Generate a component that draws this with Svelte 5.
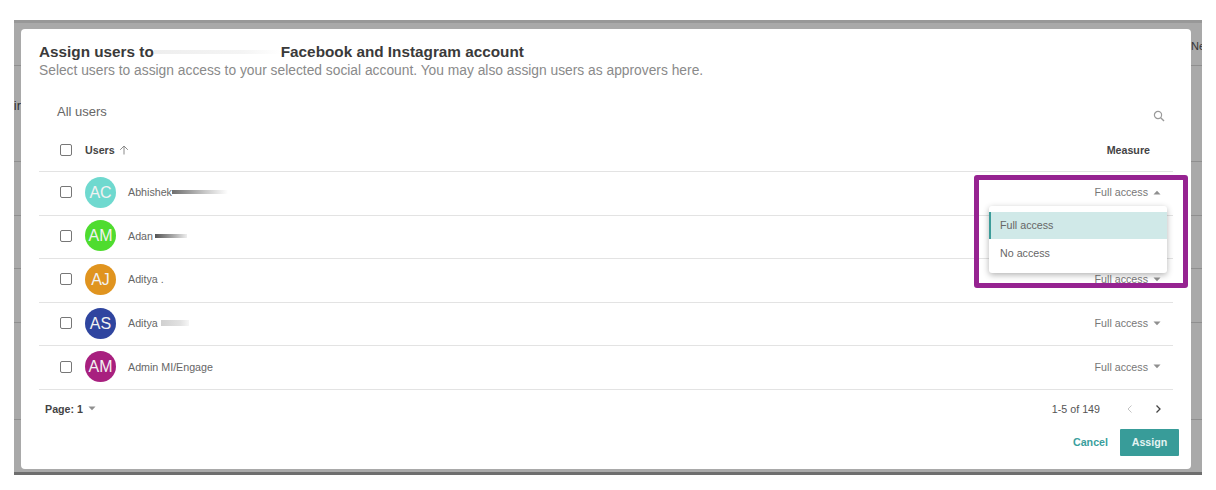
<script>
    const users = [
        { initials: "AC", name: "Abhishek", color: "#6fd9cf", blur: "wide", open: true },
        { initials: "AM", name: "Adan", color: "#4fdc2f", blur: "short", hidden: true },
        { initials: "AJ", name: "Aditya .", color: "#e0941f", clipped: true },
        { initials: "AS", name: "Aditya", color: "#2f459f", blur: "faint" },
        { initials: "AM", name: "Admin MI/Engage", color: "#a8207f" }
    ];

    // lines of the page that sits behind the dialog
    const pageRows = [42, 95, 53, 52, 53, 96];
</script>

<main class="page">
    <div class="backdrop">
        <div class="under">
            {#each pageRows as h}
                <div class="under-row" style="height: {h}px"></div>
            {/each}
        </div>
        <span class="peek left">ir</span>
        <span class="peek right">Ne</span>

        <section class="dialog">
            <header class="head">
                <h1>
                    <span>Assign users to</span>
                    <i class="smudge title-smudge"></i>
                    <span>Facebook and Instagram account</span>
                </h1>
                <p>Select users to assign access to your selected social account. You may also assign users as approvers here.</p>
            </header>

            <div class="tools">
                <span class="all">All users</span>
                <svg class="search" viewBox="0 0 12 12" width="12" height="12">
                    <circle cx="5" cy="5" r="3.6" fill="none" stroke="#9a9a9a" stroke-width="1.2" />
                    <path d="M7.7 7.7 11 11" stroke="#9a9a9a" stroke-width="1.4" />
                </svg>
            </div>

            <div class="table">
                <div class="row header">
                    <span class="check"></span>
                    <span class="col-users">Users</span>
                    <svg viewBox="0 0 10 10" width="10" height="10">
                        <path d="M5 9.5V1M1.2 4.8 5 1l3.8 3.8" fill="none" stroke="#8a8a8a" stroke-width="1" />
                    </svg>
                    <span class="col-measure">Measure</span>
                </div>

                {#each users as user}
                    <div class="row">
                        <span class="check"></span>
                        <span class="avatar" style="background: {user.color}">{user.initials}</span>
                        <span class="name">{user.name}</span>
                        {#if user.blur}
                            <i class="smudge {user.blur}"></i>
                        {/if}
                        {#if !user.hidden}
                            <span class="access">
                                Full access
                                <svg viewBox="0 0 8 5" width="8" height="5">
                                    <path d={user.open ? "M0.5 4.5 4 0.8 7.5 4.5Z" : "M0.5 0.5 4 4.2 7.5 0.5Z"} fill="#8f8f8f" />
                                </svg>
                            </span>
                        {/if}
                    </div>
                {/each}
            </div>

            <div class="pager">
                <span class="page-select">
                    Page: 1
                    <svg viewBox="0 0 8 5" width="8" height="5"><path d="M0.5 0.5 4 4.2 7.5 0.5Z" fill="#8f8f8f" /></svg>
                </span>
                <span class="count">1-5 of 149</span>
                <svg class="prev" viewBox="0 0 8 10" width="8" height="10"><path d="M5.5 1.5 2 5l3.5 3.5" fill="none" stroke="#c4c4c4" stroke-width="1" /></svg>
                <svg class="next" viewBox="0 0 8 10" width="8" height="10"><path d="M2.5 1.5 6 5 2.5 8.5" fill="none" stroke="#444" stroke-width="1.3" /></svg>
            </div>

            <footer class="actions">
                <button class="cancel">Cancel</button>
                <button class="assign">Assign</button>
            </footer>

            <div class="highlight"></div>
            <div class="menu">
                <div class="option active">Full access</div>
                <div class="option">No access</div>
            </div>
        </section>
    </div>
</main>

<style>
    :global(body) {
        margin: 0;
        background: #fff;
    }

    .page {
        width: 1216px;
        height: 490px;
        padding: 20px 14px 15px;
        box-sizing: border-box;
        font-family: "Liberation Sans", Arial, sans-serif;
        color: #555;
    }

    .backdrop {
        position: relative;
        height: 455px;
        background: #a9a9a9;
        border-top: 3px solid #989898;
        border-bottom: 3px solid #6e6e6e;
        box-sizing: border-box;
    }

    .under-row {
        border-bottom: 1px solid #8f8f8f;
    }

    .peek {
        position: absolute;
        color: #333;
        overflow: hidden;
    }

    .peek.left {
        left: 0;
        top: 75px;
        width: 7px;
        font-size: 13px;
        direction: rtl;
    }

    .peek.right {
        right: 0;
        top: 17px;
        width: 11px;
        font-size: 11px;
    }

    .dialog {
        position: absolute;
        left: 7px;
        top: 6px;
        width: 1170px;
        height: 440px;
        background: #fff;
        border-radius: 4px;
        padding: 14px 18px 0;
        box-sizing: border-box;
        display: flex;
        flex-direction: column;
    }

    .head h1 {
        margin: 0;
        display: flex;
        align-items: center;
        font-size: 15.3px;
        line-height: 17px;
        font-weight: 700;
        color: #3a3a3a;
    }

    .title-smudge {
        width: 127px;
    }

    .head p {
        margin: 2px 0 0;
        font-size: 13.8px;
        line-height: 17px;
        color: #8a8a8a;
    }

    .smudge {
        display: inline-block;
        height: 4px;
        background: linear-gradient(90deg, #eee, #f4f4f4 70%, #fff);
    }

    .smudge.wide {
        width: 56px;
        background: linear-gradient(90deg, #6e6e6e, #c9c9c9 60%, #fff);
    }

    .smudge.short {
        width: 32px;
        margin-left: 2px;
        background: linear-gradient(90deg, #555, #b5b5b5 65%, #eee);
    }

    .smudge.faint {
        width: 28px;
        height: 6px;
        margin-left: 3px;
        background: linear-gradient(90deg, #d0d0d0, #e2e2e2 70%, #f6f6f6);
    }

    .tools {
        display: flex;
        align-items: center;
        justify-content: space-between;
        padding: 0 8px 0 18px;
        margin-top: 18px;
        height: 28px;
    }

    .all {
        font-size: 13px;
        color: #666;
    }

    .search {
        margin-top: 10px;
    }

    .table {
        margin-top: 9px;
    }

    .row {
        height: 43.6px;
        display: flex;
        align-items: center;
        padding: 0 23px 2px 21px;
        border-bottom: 1px solid #e3e3e3;
        box-sizing: border-box;
        font-size: 10.7px;
    }

    .row.header {
        height: 38px;
        padding-bottom: 6px;
    }

    .check {
        width: 12px;
        height: 12px;
        box-sizing: border-box;
        border: 1px solid #777;
        border-radius: 2px;
        margin-right: 13px;
        flex: none;
    }

    .col-users {
        font-weight: 700;
        color: #444;
        margin-right: 4px;
    }

    .col-measure {
        margin-left: auto;
        font-weight: 700;
        color: #444;
    }

    .avatar {
        width: 31px;
        height: 31px;
        border-radius: 50%;
        color: #f2f2f2;
        font-size: 16px;
        line-height: 31px;
        text-align: center;
        margin-right: 12px;
        flex: none;
    }

    .name {
        color: #666;
    }

    .access {
        margin-left: auto;
        margin-right: -11px;
        color: #777;
        display: flex;
        align-items: center;
        gap: 5px;
    }

    .pager {
        display: flex;
        align-items: center;
        height: 38px;
        padding: 0 11px 0 6px;
        font-size: 10.7px;
    }

    .page-select {
        font-weight: 700;
        color: #444;
        display: flex;
        align-items: center;
        gap: 5px;
    }

    .count {
        margin-left: auto;
        color: #555;
    }

    .prev {
        margin-left: 26px;
    }

    .next {
        margin-left: 20px;
    }

    .actions {
        display: flex;
        justify-content: flex-end;
        align-items: center;
        margin-top: 1px;
        margin-right: -6px;
        gap: 12px;
    }

    button {
        font-family: inherit;
        font-size: 10.7px;
        font-weight: 700;
        border: none;
        padding: 0;
    }

    .cancel {
        background: none;
        color: #3a9f9d;
    }

    .assign {
        width: 59px;
        height: 27px;
        background: #389c99;
        color: #e4f3f2;
        border-radius: 1px;
    }

    .highlight {
        position: absolute;
        left: 953px;
        top: 146px;
        width: 214px;
        height: 113px;
        border: 5px solid #962391;
        border-radius: 3px;
        box-sizing: border-box;
    }

    .menu {
        position: absolute;
        left: 968px;
        top: 177px;
        width: 178px;
        height: 67px;
        padding-top: 6px;
        box-sizing: border-box;
        background: #fff;
        border-radius: 3px;
        box-shadow: 0 2px 6px rgba(0, 0, 0, 0.3);
        font-size: 10.7px;
        color: #666;
    }

    .option {
        height: 27px;
        line-height: 27px;
        padding-left: 11px;
    }

    .option + .option {
        padding-top: 1px;
    }

    .option.active {
        background: #d0e9e8;
        border-left: 2px solid #3c9c99;
        padding-left: 9px;
    }
</style>
